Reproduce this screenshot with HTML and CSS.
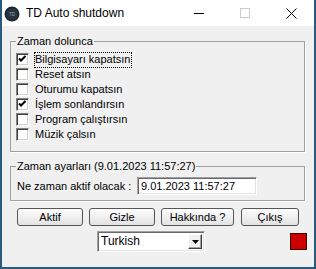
FILE: index.html
```html
<!DOCTYPE html>
<html lang="tr">
<head>
    <meta charset="UTF-8">
    <title>TD Auto shutdown</title>
    <link rel="stylesheet" href="styles.css">
</head>
<body>
    <div class="window">
        <div class="titlebar">
            <svg class="app-icon" width="16" height="16" viewBox="0 0 16 16">
                <circle cx="8" cy="8" r="7.5" fill="#1b2531"/>
                <circle cx="8" cy="8" r="6" fill="#27333f"/>
                <text x="8" y="9.6" font-size="4.5" fill="#9aa6b2" text-anchor="middle" font-family="Liberation Sans">TD</text>
            </svg>
            <span class="title">TD Auto shutdown</span>
            <div class="caption-buttons">
                <div class="cap">
                    <svg width="10" height="10" viewBox="0 0 10 10"><path d="M0 5.5h10" stroke="#000" stroke-width="1"/></svg>
                </div>
                <div class="cap">
                    <svg width="10" height="10" viewBox="0 0 10 10"><rect x="0.5" y="0.5" width="9" height="9" fill="none" stroke="#cccccc"/></svg>
                </div>
                <div class="cap">
                    <svg width="11" height="11" viewBox="0 0 11 11"><path d="M0.5 0.5L10.5 10.5M10.5 0.5L0.5 10.5" stroke="#000" stroke-width="1"/></svg>
                </div>
            </div>
        </div>

        <div class="client">
            <fieldset class="group group-actions">
                <legend>Zaman dolunca</legend>
                <div class="check">
                    <span class="box"><svg width="11" height="11" viewBox="0 0 11 11"><path d="M2 4.5L4 6.5L8.5 2" stroke="#000" stroke-width="2" fill="none"/></svg></span>
                    <span class="label focused">Bilgisayarı kapatsın</span>
                </div>
                <div class="check">
                    <span class="box"></span>
                    <span class="label">Reset atsın</span>
                </div>
                <div class="check">
                    <span class="box"></span>
                    <span class="label">Oturumu kapatsın</span>
                </div>
                <div class="check">
                    <span class="box"><svg width="11" height="11" viewBox="0 0 11 11"><path d="M2 4.5L4 6.5L8.5 2" stroke="#000" stroke-width="2" fill="none"/></svg></span>
                    <span class="label">İşlem sonlandırsın</span>
                </div>
                <div class="check">
                    <span class="box"></span>
                    <span class="label">Program çalıştırsın</span>
                </div>
                <div class="check">
                    <span class="box"></span>
                    <span class="label">Müzik çalsın</span>
                </div>
            </fieldset>

            <fieldset class="group group-time">
                <legend>Zaman ayarları (9.01.2023 11:57:27)</legend>
                <div class="when-row">
                    <span class="when-label">Ne zaman aktif olacak :</span>
                    <div class="edit">9.01.2023 11:57:27</div>
                </div>
            </fieldset>

            <div class="buttons">
                <button class="btn btn-aktif">Aktif</button>
                <button class="btn btn-gizle">Gizle</button>
                <button class="btn btn-hakkinda">Hakkında ?</button>
                <button class="btn btn-cikis">Çıkış</button>
            </div>

            <div class="bottom-row">
                <div class="combo">
                    <span class="combo-text">Turkish</span>
                    <span class="combo-btn">
                        <svg width="7" height="4" viewBox="0 0 7 4"><path d="M0 0h7L3.5 4z" fill="#000"/></svg>
                    </span>
                </div>
                <div class="status"></div>
            </div>
        </div>
    </div>
</body>
</html>
```

FILE: styles.css
```css
* {
    box-sizing: border-box;
}

body {
    margin: 0;
    font-family: "Liberation Sans", Arial, sans-serif;
    font-size: 11px;
    line-height: 13px;
    color: #000;
    background: #fff;
}

.window {
    width: 316px;
    height: 269px;
    border: 2px solid #2a5a7e;
    border-top: 0;
    display: flex;
    flex-direction: column;
    background: #f0f0f0;
}

/* title bar */
.titlebar {
    height: 26px;
    flex-shrink: 0;
    background: #fff;
    display: flex;
    align-items: center;
}

.app-icon {
    margin: 1px 0 0 2px;
}

.title {
    margin-left: 6px;
    font-size: 12px;
}

.caption-buttons {
    margin-left: auto;
    display: flex;
}

.cap {
    width: 46px;
    height: 26px;
    display: flex;
    align-items: center;
    justify-content: center;
}

/* client area */
.client {
    flex: 1;
    padding-top: 9px;
}

.group {
    margin: 0 0 0 8px;
    width: 295px;
    min-width: 0;
    border: 1px solid #a0a0a0;
    box-shadow: 1px 1px 0 #fff;
}

.group legend {
    padding: 0 1px;
    line-height: 13px;
}

.group-actions {
    padding: 4px 0 9px 5px;
}

.group-time {
    margin-top: 8px;
    padding: 4px 0 5px 5px;
}

.check {
    display: flex;
    align-items: center;
    height: 15px;
}

.box {
    width: 13px;
    height: 13px;
    background: #fff;
    border: 1px solid;
    border-color: #808080 #fff #fff #808080;
    box-shadow: inset 1px 1px 0 #404040, inset -1px -1px 0 #d4d0c8;
    display: flex;
    align-items: center;
    justify-content: center;
}

.label {
    margin-left: 5px;
    padding: 0 1px 1px 0;
    border: 1px dotted transparent;
}

.label.focused {
    border-color: #000;
}

.when-row {
    display: flex;
    align-items: center;
    height: 18px;
}

.when-label {
    width: 121px;
    padding-left: 1px;
}

.edit {
    width: 120px;
    height: 18px;
    background: #fff;
    border: 1px solid;
    border-color: #a0a0a0 #fff #fff #a0a0a0;
    box-shadow: inset 1px 1px 0 #696969, inset -1px -1px 0 #e3e3e3;
    padding: 1px 0 0 3px;
    line-height: 14px;
}

/* buttons */
.buttons {
    display: flex;
    margin: 7px 0 0 15px;
}

.btn {
    height: 18px;
    padding: 0;
    margin: 0 6px 0 0;
    font: inherit;
    color: #000;
    border: 1px solid #555;
    border-radius: 3px;
    background: linear-gradient(#fdfdfd, #e2e2e2);
}

.btn-aktif,
.btn-gizle {
    width: 66px;
}

.btn-hakkinda {
    width: 73px;
    margin-right: 7px;
}

.btn-cikis {
    width: 58px;
}

/* language + status */
.bottom-row {
    display: flex;
    align-items: center;
    margin-top: 5px;
    padding: 0 7px 0 95px;
}

.combo {
    width: 108px;
    height: 21px;
    background: #fff;
    border: 1px solid;
    border-color: #a0a0a0 #fff #fff #a0a0a0;
    box-shadow: inset 1px 1px 0 #696969, inset -1px -1px 0 #e3e3e3;
    display: flex;
    align-items: center;
    padding: 0 2px 0 3px;
}

.combo-text {
    flex: 1;
    font-size: 12px;
}

.combo-btn {
    width: 14px;
    height: 15px;
    background: #f0f0f0;
    border: 1px solid;
    border-color: #fff #404040 #404040 #fff;
    box-shadow: inset -1px -1px 0 #a0a0a0;
    display: flex;
    align-items: center;
    justify-content: center;
}

.status {
    margin-left: auto;
    width: 17px;
    height: 17px;
    background: #cc0000;
    border: 1px solid #3a0000;
}
```
